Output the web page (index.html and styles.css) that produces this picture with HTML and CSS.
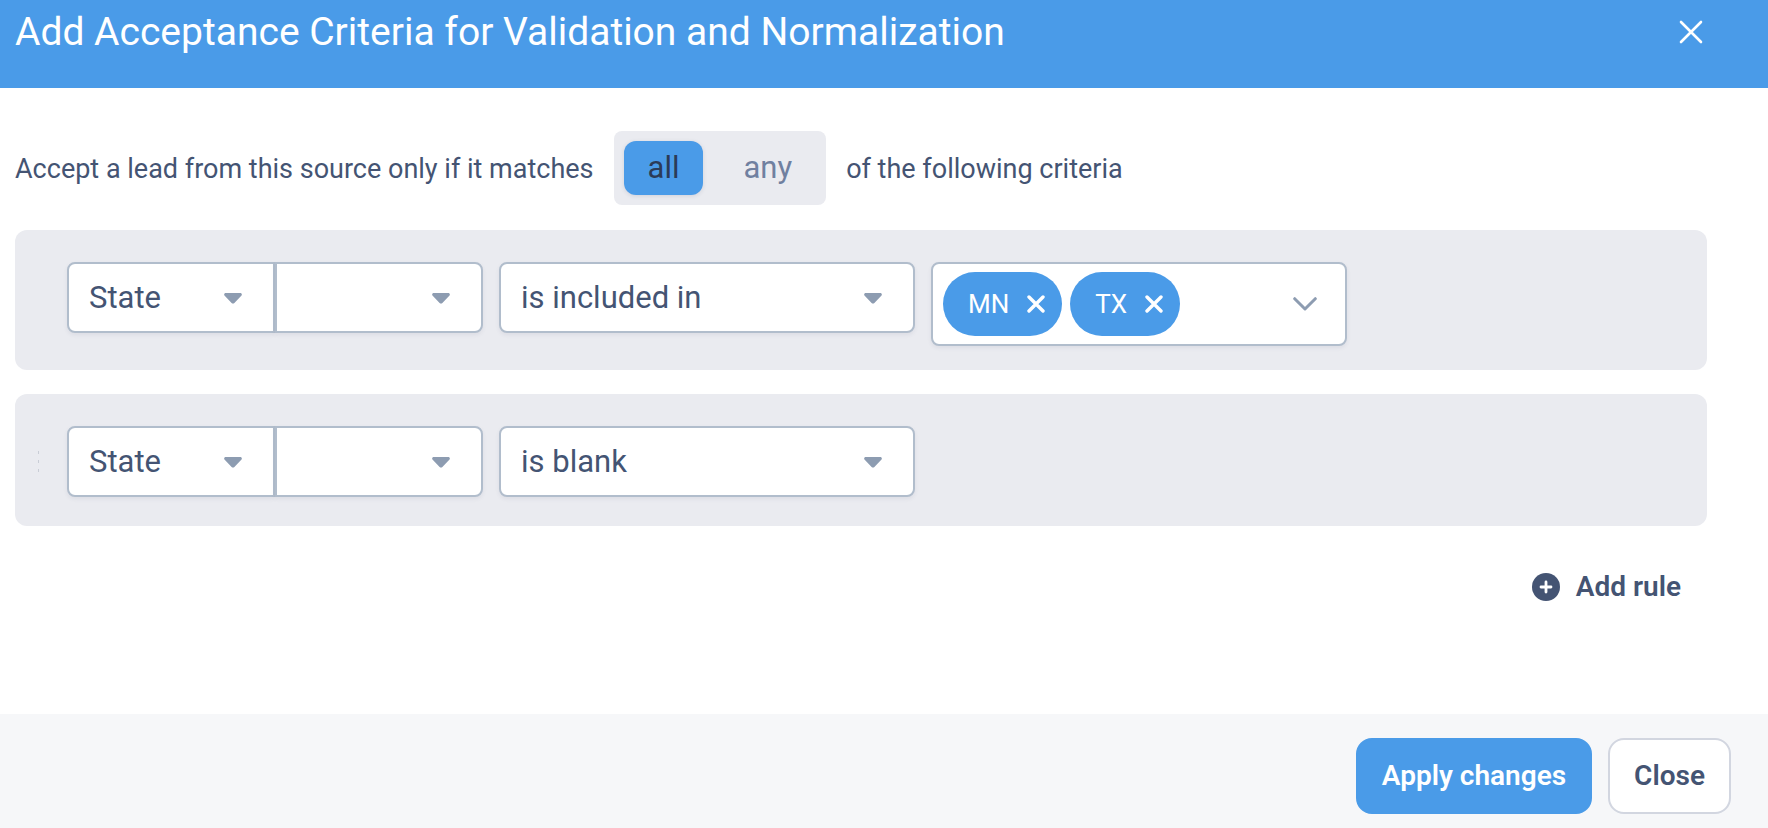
FILE: index.html
```
<!DOCTYPE html>
<html lang="en">
<head>
<meta charset="utf-8">
<meta name="viewport" content="width=device-width, initial-scale=1">
<title>Add Acceptance Criteria</title>
<link rel="stylesheet" href="styles.css">
</head>
<body>
<div class="dialog" role="dialog" aria-labelledby="dialog-title">
  <header class="dialog-header">
    <h1 class="dialog-title" id="dialog-title">Add Acceptance Criteria for Validation and Normalization</h1>
    <button class="icon-button" type="button" aria-label="Close dialog">
      <svg width="24" height="24" viewBox="0 0 24 24" fill="none" stroke="currentColor" stroke-width="2.6" stroke-linecap="round"><path d="M2 2 22 22M22 2 2 22"/></svg>
    </button>
  </header>

  <main class="dialog-body">
    <div class="match-line">
      <span class="match-text">Accept a lead from this source only if it matches</span>
      <div class="toggle" role="radiogroup" aria-label="Match mode">
        <label class="toggle-option"><input class="toggle-input" type="radio" name="match" value="all" checked><span class="toggle-text">all</span></label>
        <label class="toggle-option"><input class="toggle-input" type="radio" name="match" value="any"><span class="toggle-text">any</span></label>
      </div>
      <span class="match-text">of the following criteria</span>
    </div>

    <section class="rule" aria-label="Rule 1">
      <span class="grip"></span>
      <div class="rule-fields">
        <div class="field-pair">
          <div class="select-box">
            <select class="select" aria-label="Field"><option>State</option></select>
            <svg class="caret" width="18" height="11" viewBox="0 0 18 11"><path d="M1.8 0H16.2C17.8 0 18.4 1.7 17.3 2.8L10.4 10C9.6 10.8 8.4 10.8 7.6 10L.7 2.8C-.4 1.7.2 0 1.8 0Z"/></svg>
          </div>
          <div class="select-box">
            <select class="select" aria-label="Field part"><option></option></select>
            <svg class="caret" width="18" height="11" viewBox="0 0 18 11"><path d="M1.8 0H16.2C17.8 0 18.4 1.7 17.3 2.8L10.4 10C9.6 10.8 8.4 10.8 7.6 10L.7 2.8C-.4 1.7.2 0 1.8 0Z"/></svg>
          </div>
        </div>
        <div class="select-box">
          <select class="select" aria-label="Condition"><option>is included in</option></select>
          <svg class="caret" width="18" height="11" viewBox="0 0 18 11"><path d="M1.8 0H16.2C17.8 0 18.4 1.7 17.3 2.8L10.4 10C9.6 10.8 8.4 10.8 7.6 10L.7 2.8C-.4 1.7.2 0 1.8 0Z"/></svg>
        </div>
        <div class="multi">
          <span class="chip">MN
            <button class="chip-remove" type="button" aria-label="Remove MN"><svg width="18" height="18" viewBox="0 0 18 18" fill="none" stroke="currentColor" stroke-width="3.4" stroke-linecap="round"><path d="M2 2 16 16M16 2 2 16"/></svg></button>
          </span>
          <span class="chip">TX
            <button class="chip-remove" type="button" aria-label="Remove TX"><svg width="18" height="18" viewBox="0 0 18 18" fill="none" stroke="currentColor" stroke-width="3.4" stroke-linecap="round"><path d="M2 2 16 16M16 2 2 16"/></svg></button>
          </span>
          <button class="multi-toggle" type="button" aria-label="Show options"><svg width="24" height="14" viewBox="0 0 24 14" fill="none" stroke="currentColor" stroke-width="3" stroke-linecap="round" stroke-linejoin="round"><path d="M1.7 1.7 12 12 22.3 1.7"/></svg></button>
        </div>
      </div>
    </section>

    <section class="rule" aria-label="Rule 2">
      <span class="grip"><svg width="1" height="22" viewBox="0 0 1 22" fill="#c9cdd6"><path d="M0 0H1V3H0ZM0 9H1V12H0ZM0 18H1V21H0Z"/></svg></span>
      <div class="rule-fields">
        <div class="field-pair">
          <div class="select-box">
            <select class="select" aria-label="Field"><option>State</option></select>
            <svg class="caret" width="18" height="11" viewBox="0 0 18 11"><path d="M1.8 0H16.2C17.8 0 18.4 1.7 17.3 2.8L10.4 10C9.6 10.8 8.4 10.8 7.6 10L.7 2.8C-.4 1.7.2 0 1.8 0Z"/></svg>
          </div>
          <div class="select-box">
            <select class="select" aria-label="Field part"><option></option></select>
            <svg class="caret" width="18" height="11" viewBox="0 0 18 11"><path d="M1.8 0H16.2C17.8 0 18.4 1.7 17.3 2.8L10.4 10C9.6 10.8 8.4 10.8 7.6 10L.7 2.8C-.4 1.7.2 0 1.8 0Z"/></svg>
          </div>
        </div>
        <div class="select-box">
          <select class="select" aria-label="Condition"><option>is blank</option></select>
          <svg class="caret" width="18" height="11" viewBox="0 0 18 11"><path d="M1.8 0H16.2C17.8 0 18.4 1.7 17.3 2.8L10.4 10C9.6 10.8 8.4 10.8 7.6 10L.7 2.8C-.4 1.7.2 0 1.8 0Z"/></svg>
        </div>
      </div>
    </section>

    <button class="add-rule" type="button">
      <svg width="28" height="28" viewBox="0 0 28 28"><circle cx="14" cy="14" r="14" fill="currentColor"/><path d="M14 9V19M9 14H19" fill="none" stroke="#fff" stroke-width="2.8" stroke-linecap="round"/></svg>
      Add rule
    </button>
  </main>

  <footer class="dialog-footer">
    <button class="button button-primary" type="button">Apply changes</button>
    <button class="button button-plain" type="button">Close</button>
  </footer>
</div>
</body>
</html>
```
FILE: styles.css
```
*, *::before, *::after { box-sizing: border-box; }

:root {
  --blue: #4a9be8;
  --ink: #445473;
  --line: #b1bdcc;
  --muted: #8d9cb1;
  --panel: #eaebf0;
}

body {
  margin: 0;
  background: #fff;
  color: var(--ink);
  font: 27px/32px Roboto, "Liberation Sans", sans-serif;
}

button, select, input { margin: 0; font: inherit; color: inherit; }
button { padding: 0; border: 0; background: none; cursor: pointer; }
svg { display: block; }

.dialog {
  display: flex;
  flex-direction: column;
  min-height: 100vh;
}

.dialog-header {
  display: flex;
  align-items: flex-start;
  justify-content: space-between;
  padding: 8px 65px 32px 15px;
  background: var(--blue);
  color: #fff;
}

.dialog-title {
  margin: 0;
  font-size: 39px;
  font-weight: 400;
  line-height: 48px;
}

.icon-button { padding-top: 12px; }

.dialog-body {
  flex: 1;
  display: flex;
  flex-direction: column;
  gap: 24px;
  padding: 43px 61px 0 15px;
}

.match-line {
  display: flex;
  align-items: center;
  gap: 20px;
}

.match-text { padding-top: 2px; }

.toggle {
  display: flex;
  gap: 16px;
  padding: 10px;
  border-radius: 8px;
  background: var(--panel);
  font-size: 31px;
}

.toggle-option { position: relative; }
.toggle-input { position: absolute; opacity: 0; }

.toggle-text {
  display: block;
  padding: 0 24px;
  border-radius: 12px;
  color: #7080a0;
  line-height: 54px;
}

.toggle-input:checked + .toggle-text {
  background: var(--blue);
  box-shadow: 0 1px 4px rgb(60 70 100 / 15%);
  color: #2b3b57;
}

.rule {
  display: flex;
  padding: 32px 40px 24px 23px;
  border-radius: 12px;
  background: var(--panel);
}

.match-line + .rule { margin-top: 1px; }
.rule + .rule { padding-bottom: 29px; }

.grip {
  width: 29px;
  flex: none;
  display: flex;
  align-items: center;
}

.rule-fields {
  flex: 1;
  display: grid;
  grid-template-columns: repeat(3, 26%);
  gap: 16px;
  align-items: start;
}

.field-pair {
  display: grid;
  grid-template-columns: 1fr 1fr;
}

.select-box {
  position: relative;
  font-size: 31px;
}

.select {
  display: block;
  width: 100%;
  height: 71px;
  padding: 0 64px 0 20px;
  border: 2px solid var(--line);
  border-radius: 8px;
  background: #fff;
  box-shadow: 0 2px 4px rgb(60 70 100 / 8%);
  appearance: none;
}

.field-pair .select-box:first-child .select { border-radius: 8px 0 0 8px; }
.field-pair .select-box:last-child .select { border-radius: 0 8px 8px 0; }

.caret {
  position: absolute;
  top: 31px;
  right: 33px;
  fill: var(--muted);
  pointer-events: none;
}

.multi {
  display: flex;
  align-items: center;
  gap: 8px;
  padding: 8px 28px 8px 10px;
  border: 2px solid var(--line);
  border-radius: 8px;
  background: #fff;
  box-shadow: 0 2px 4px rgb(60 70 100 / 8%);
}

.chip {
  display: flex;
  align-items: center;
  gap: 18px;
  padding: 0 17px 0 25px;
  border-radius: 32px;
  background: var(--blue);
  color: #fff;
  font-size: 26px;
  line-height: 64px;
}

.multi-toggle {
  margin-left: auto;
  color: var(--muted);
}

.add-rule {
  display: flex;
  align-items: center;
  align-self: flex-end;
  gap: 16px;
  margin: 21px 26px 0 0;
  font-size: 28px;
  font-weight: 600;
}

.dialog-footer {
  display: flex;
  justify-content: flex-end;
  gap: 16px;
  padding: 24px 37px 14px;
  background: #f6f7f9;
}

.button {
  padding: 0 24px;
  border: 2px solid var(--blue);
  border-radius: 16px;
  font-size: 28px;
  font-weight: 600;
  line-height: 72px;
}

.button-primary { background: var(--blue); color: #fff; }
.button-plain { border-color: #d2d6e0; background: #fff; }
```
